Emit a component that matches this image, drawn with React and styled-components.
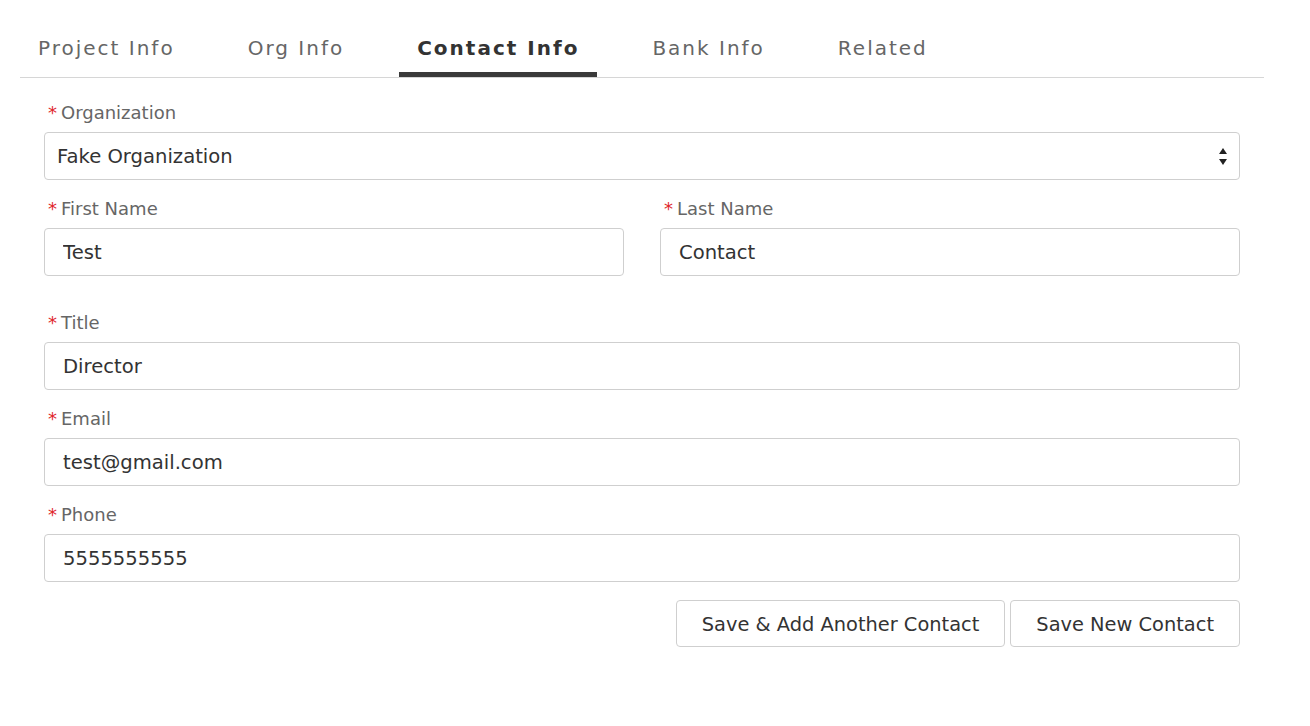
import React from "react";
import styled, { createGlobalStyle } from "styled-components";

const Global = createGlobalStyle`
  html, body { margin: 0; padding: 0; background: #fff; }
  body { font-family: "DejaVu Sans", Verdana, sans-serif; }
  * { box-sizing: border-box; }
`;

const Page = styled.div`
  padding: 20px 46px 0 20px;
`;

const TabBar = styled.div`
  display: flex;
  gap: 37px;
  border-bottom: 1px solid #d6d6d6;
`;

const Tab = styled.div`
  height: 57px;
  padding: 16px 18px 12px;
  font-size: 20px;
  line-height: 24px;
  letter-spacing: 2px;
  color: ${(p) => (p.$active ? "#333" : "#666")};
  font-weight: ${(p) => (p.$active ? 700 : 400)};
  border-bottom: 5px solid ${(p) => (p.$active ? "#3a3a3a" : "transparent")};
  white-space: nowrap;
  cursor: pointer;
`;

const Form = styled.form`
  padding: 22px 24px 0;
  display: flex;
  flex-direction: column;
`;

const Row = styled.div`
  display: grid;
  grid-template-columns: ${(p) => (p.$cols === 2 ? "1fr 1fr" : "1fr")};
  column-gap: 36px;
  margin-bottom: ${(p) => p.$mb || 16}px;
`;

const Field = styled.div`
  display: flex;
  flex-direction: column;
`;

const Label = styled.label`
  height: 24px;
  line-height: 26px;
  font-size: 18px;
  color: #666;
  padding-left: 4px;
  margin-bottom: 8px;
`;

const Star = styled.span`
  color: #e0262b;
  margin-right: 4px;
`;

const Input = styled.input`
  height: 48px;
  width: 100%;
  border: 1px solid #cfcfcf;
  border-radius: 4px;
  padding: 0 18px;
  font-family: "DejaVu Sans", Verdana, sans-serif;
  font-size: 19.6px;
  color: #333;
  outline: none;
  background: #fff;
`;

const SelectWrap = styled.div`
  position: relative;
`;

const Select = styled.select`
  appearance: none;
  -webkit-appearance: none;
  height: 48px;
  width: 100%;
  border: 1px solid #cfcfcf;
  border-radius: 4px;
  padding: 0 12px;
  font-family: "DejaVu Sans", Verdana, sans-serif;
  font-size: 19.6px;
  color: #333;
  background: #fff;
  outline: none;
`;

const Arrows = styled.svg`
  position: absolute;
  right: 12px;
  top: 14px;
  pointer-events: none;
`;

const Actions = styled.div`
  display: flex;
  justify-content: flex-end;
  gap: 5px;
  margin-top: 2px;
`;

const Button = styled.button`
  height: 47px;
  padding: 2px 25px 0;
  border: 1px solid #cfcfcf;
  border-radius: 4px;
  background: #fff;
  font-family: "DejaVu Sans", Verdana, sans-serif;
  font-size: 19.4px;
  color: #333;
  cursor: pointer;
`;

const tabs = ["Project Info", "Org Info", "Contact Info", "Bank Info", "Related"];

function Req({ children }) {
  return (
    <Label>
      <Star>*</Star>
      {children}
    </Label>
  );
}

export default function App() {
  return (
    <Page>
      <Global />
      <TabBar>
        {tabs.map((t) => (
          <Tab key={t} $active={t === "Contact Info"}>
            {t}
          </Tab>
        ))}
      </TabBar>
      <Form onSubmit={(e) => e.preventDefault()}>
        <Row>
          <Field>
            <Req>Organization</Req>
            <SelectWrap>
              <Select defaultValue="fake">
                <option value="fake">Fake Organization</option>
              </Select>
              <Arrows width="10" height="20" viewBox="0 0 10 20">
                <polygon points="5,2 9,8 1,8" fill="#222" />
                <polygon points="1,13 9,13 5,19" fill="#222" />
              </Arrows>
            </SelectWrap>
          </Field>
        </Row>
        <Row $cols={2} $mb={34}>
          <Field>
            <Req>First Name</Req>
            <Input defaultValue="Test" />
          </Field>
          <Field>
            <Req>Last Name</Req>
            <Input defaultValue="Contact" />
          </Field>
        </Row>
        <Row>
          <Field>
            <Req>Title</Req>
            <Input defaultValue="Director" />
          </Field>
        </Row>
        <Row>
          <Field>
            <Req>Email</Req>
            <Input defaultValue="test@gmail.com" />
          </Field>
        </Row>
        <Row $mb={16}>
          <Field>
            <Req>Phone</Req>
            <Input defaultValue="5555555555" />
          </Field>
        </Row>
        <Actions>
          <Button type="button">Save &amp; Add Another Contact</Button>
          <Button type="submit">Save New Contact</Button>
        </Actions>
      </Form>
    </Page>
  );
}
